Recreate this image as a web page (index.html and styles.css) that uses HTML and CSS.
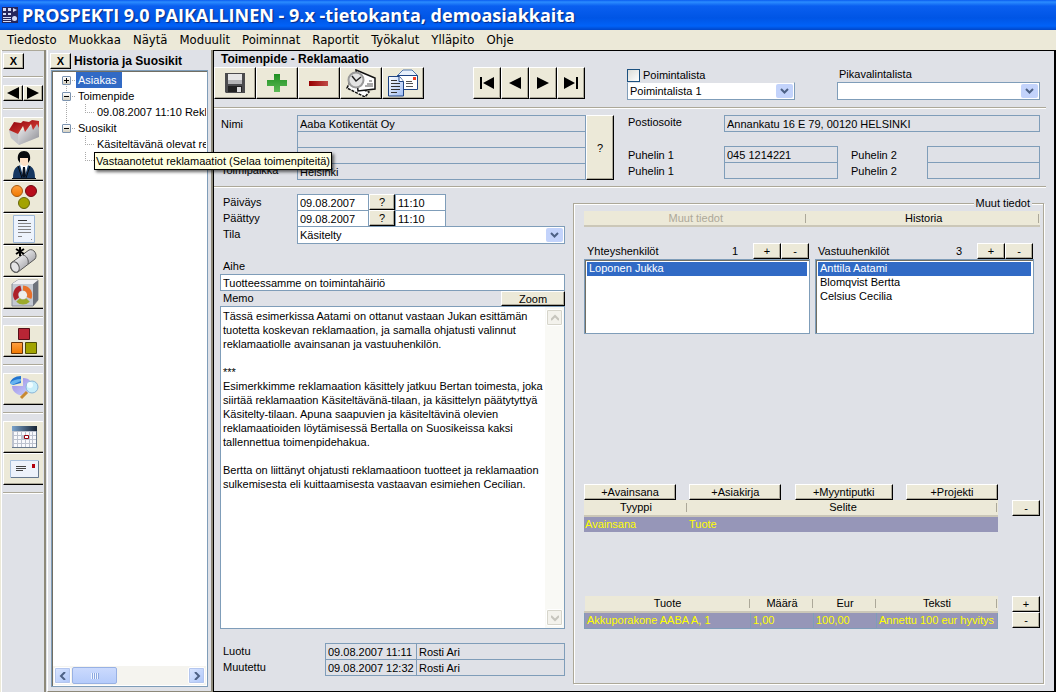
FILE: index.html
```html
<!DOCTYPE html>
<html lang="fi">
<head>
<meta charset="utf-8">
<title>PROSPEKTI 9.0 PAIKALLINEN</title>
<link rel="stylesheet" href="styles.css">
</head>
<body>
<svg class="defs" width="0" height="0" aria-hidden="true">
  <defs>
    <linearGradient id="gBlue" x1="0" y1="0" x2="1" y2="1"><stop offset="0" stop-color="#fff"/><stop offset="1" stop-color="#9dbcf5"/></linearGradient>
    <linearGradient id="gGreen" x1="0" y1="0" x2="0" y2="1"><stop offset="0" stop-color="#1f8f22"/><stop offset="1" stop-color="#5cba55"/></linearGradient>
    <linearGradient id="gRed" x1="0" y1="0" x2="1" y2="0"><stop offset="0" stop-color="#980000"/><stop offset="1" stop-color="#c04a46"/></linearGradient>
    <linearGradient id="gRoof" x1="0" y1="0" x2="1" y2="1"><stop offset="0" stop-color="#8c0009"/><stop offset="1" stop-color="#e2483c"/></linearGradient>
    <linearGradient id="gGrey" x1="0" y1="0" x2="1" y2="1"><stop offset="0" stop-color="#f4f4f6"/><stop offset="1" stop-color="#8a8a90"/></linearGradient>
    <linearGradient id="gPipe" x1="0" y1="0" x2="1" y2="1"><stop offset="0.200" stop-color="#ffffff"/><stop offset="0.800" stop-color="#9c9ca2"/></linearGradient>
    <linearGradient id="gOrange" x1="0" y1="0" x2="0" y2="1"><stop offset="0" stop-color="#ffa040"/><stop offset="1" stop-color="#f07800"/></linearGradient>
    <linearGradient id="gPie" x1="0" y1="0" x2="1" y2="1"><stop offset="0" stop-color="#9a86e0"/><stop offset="1" stop-color="#c9d3ff"/></linearGradient>
    <linearGradient id="gCal" x1="0" y1="0" x2="1" y2="0"><stop offset="0" stop-color="#7aa3cc"/><stop offset="1" stop-color="#162231"/></linearGradient>
  </defs>
</svg>

<header class="titlebar">
  <svg width="16" height="16" viewBox="0 0 16 16" aria-hidden="true"><path fill="#26265c" d="M0 0h16v16H0z"/><path fill="#d5dcf5" d="M1 1h3v3H1zM6 1h3v3H6zM11 1l4 2-4 2zM1 6h3v2H1zM6 6h3v2H6zM1 10h8v1H1zM1 12h8v1H1zM1 14h8v1H1z"/><circle cx="12.500" cy="11.500" r="2.500" fill="#d5dcf5"/></svg>
  <h1>PROSPEKTI 9.0 PAIKALLINEN - 9.x -tietokanta, demoasiakkaita</h1>
</header>

<nav class="menubar">
  <button type="button">Tiedosto</button><button type="button">Muokkaa</button><button type="button">Näytä</button><button type="button">Moduulit</button><button type="button">Poiminnat</button><button type="button">Raportit</button><button type="button">Työkalut</button><button type="button">Ylläpito</button><button type="button">Ohje</button>
</nav>

<div class="workspace">
  <aside class="toolstrip">
    <button type="button" class="btn close">X</button>
    <hr>
    <div class="arrows">
      <button type="button" class="btn" aria-label="Edellinen"><svg width="14" height="12" viewBox="0 0 14 12"><path d="M13 0v12L1 6z"/></svg></button><button type="button" class="btn" aria-label="Seuraava"><svg width="14" height="12" viewBox="0 0 14 12"><path d="M1 0v12l12-6z"/></svg></button>
    </div>
    <hr>
    <button type="button" class="tool" aria-label="Yritykset"><svg width="32" height="28" viewBox="0 0 32 28"><path fill="#d9d9dc" d="M1 11l9 3 21-11v15l-20 8-8-7z"/><path fill="url(#gGrey)" d="M10 13L31 4v14l-20 8z"/><path fill="#c3c3c8" d="M1 11l9 3 1 12-8-7z"/><path fill="url(#gRoof)" d="M1 11L6 3l7 1 2-2 6 1 3-2 7 1v7l-2-4-4 6-2-6-6 8-2-6-5 8z"/></svg></button>
    <button type="button" class="tool" aria-label="Henkilöt"><svg width="32" height="28" viewBox="0 0 32 28"><path fill="#153761" d="M5 27c0-9 3-12 8-13h6c5 1 8 4 8 13z"/><path fill="#fff" d="M12 14h8l-3 11h-2z"/><path fill="#06101f" d="M15 16h2l1 9-2 2-2-2zM4 27h24v1H4z"/><path fill="#ffe0c6" d="M12 6h9v5l-3 4h-3l-3-4z"/><path fill="#07090c" d="M10 9c-1-6 2-9 6-9s7 3 6 9l-2 3V7l-8 0v5z"/><path stroke="#07090c" stroke-width="1" fill="none" d="M10 15l4 12M22 15l-4 12"/></svg></button>
    <button type="button" class="tool" aria-label="Ryhmät"><svg width="32" height="28" viewBox="0 0 32 28"><g stroke-width="1"><circle cx="9" cy="8" r="5.500" fill="url(#gOrange)" stroke="#a65a12"/><circle cx="23" cy="8" r="5.500" fill="#b80d1c" stroke="#6e0a12"/><circle cx="16" cy="20" r="5.500" fill="#a3a300" stroke="#65650a"/></g></svg></button>
    <button type="button" class="tool" aria-label="Asiakirjat"><svg width="32" height="28" viewBox="0 0 32 28"><path fill="#edf3fc" stroke="#9db7d6" d="M5.500.5h21v27h-21z"/><path stroke="#333" d="M10 5.500h9"/><path stroke="#858585" d="M10 8.500h13M10 11.500h13M10 14.500h13M10 17.500h13M10 21.500h4M23 24.500h1"/></svg></button>
    <button type="button" class="tool" aria-label="Myyntiputki"><svg width="32" height="28" viewBox="0 0 32 28"><path fill="url(#gPipe)" stroke="#555" d="M3 16L21 3c5-2 9 5 6 9L10 25c-5 2-9-4-7-9z"/><ellipse cx="7" cy="20" rx="4" ry="5.500" transform="rotate(-25 7 20)" fill="#e4e4e6" stroke="#555"/><path stroke="#555" fill="none" d="M15 8c4 1 6 5 5 9"/><path stroke="#000" stroke-width="2" d="M12 0v9M8 2l8 5M16 2L8 7"/></svg></button>
    <button type="button" class="tool" aria-label="Projektit"><svg width="32" height="28" viewBox="0 0 32 28"><path fill="#c3c8d2" stroke="#8a8d96" d="M4 5l6-4h20v20l-5 6H4z"/><path fill="#6d727c" d="M25 5l5-4v20l-5 6z"/><path fill="#f0f0f3" d="M4 5h21l5-4H10z"/><circle cx="15" cy="16" r="4" fill="#eee"/><g fill="none" stroke-width="5"><path stroke="#ae2028" d="M9 20a7 7 0 0 1 4-11"/><path stroke="#e8702b" d="M15 9a7 7 0 0 1 6 10"/><path stroke="#9caa2b" d="M20 21a7 7 0 0 1-10 0"/></g></svg></button>
    <hr>
    <button type="button" class="tool" aria-label="Tuotteet"><svg width="32" height="28" viewBox="0 0 32 28"><path fill="#b92535" stroke="#551019" d="M10.500 1.500h11v11h-11z"/><path fill="url(#gOrange)" stroke="#693408" d="M3.500 15.500h11v11h-11z"/><path fill="#a2a400" stroke="#4c4c07" d="M17.500 15.500h11v11h-11z"/></svg></button>
    <hr>
    <button type="button" class="tool" aria-label="Raportit"><svg width="32" height="28" viewBox="0 0 32 28"><path fill="url(#gPie)" d="M4 11h11V3c7 0 10 5 8 10-2 6-9 9-14 6-3-2-5-4-5-8z"/><path fill="#2274cf" d="M2 8c1-4 5-7 11-7v7l-8 2z"/><path fill="#67b4f0" d="M2 8c3-3 6-4 11-4v2L4 10z"/><path stroke="#c88a31" stroke-width="3" d="M19 17l-6 6"/><circle cx="24" cy="12" r="6" fill="#c8eefa" stroke="#8ab6d8"/><circle cx="22" cy="10" r="3" fill="#eefcff"/></svg></button>
    <hr>
    <button type="button" class="tool" aria-label="Kalenteri"><svg width="32" height="28" viewBox="0 0 32 28"><path fill="#bcc2ce" d="M4 3h25v22H4z"/><path fill="url(#gCal)" d="M4 3h25v5H4z"/><path fill="#f8f9fc" d="M6 9h3v3H6zM10 9h3v3h-3zM14 9h3v3h-3zM18 9h3v3h-3zM22 9h2v3h-2zM25 9h3v3h-3zM6 13h3v3H6zM10 13h3v3h-3zM22 13h2v3h-2zM25 13h3v3h-3zM6 17h3v3H6zM10 17h3v3h-3zM14 17h3v3h-3zM18 17h3v3h-3zM22 17h2v3h-2zM25 17h3v3h-3zM6 21h3v3H6zM10 21h3v3h-3zM14 21h3v3h-3zM18 21h3v3h-3zM22 21h2v3h-2zM25 21h3v3h-3z"/><path fill="#fff" stroke="#98000c" d="M16.500 12.500h4v3h-4z"/><path fill="none" stroke="#68798d" d="M28.500 8v16.500H4"/></svg></button>
    <button type="button" class="tool" aria-label="Viestit"><svg width="32" height="28" viewBox="0 0 32 28"><path fill="#edf2fb" stroke="#a8c0dc" d="M2.500 5.500h28v17h-28z"/><path fill="none" stroke="#66788e" d="M30.500 6v16.500H3"/><path stroke="#444" d="M8 11.500h10M8 13.500h10M8 15.500h7"/><path fill="#b3000c" d="M24 9h3v4h-3z"/></svg></button>
    <hr>
  </aside>

  <aside class="history">
    <div class="panelhead"><button type="button" class="btn close">X</button><h2>Historia ja Suosikit</h2></div>
    <div class="treebox">
      <ul class="tree">
        <li><span class="node"><i class="box plus"></i><a href="#" class="sel">Asiakas</a></span></li>
        <li><span class="node"><i class="box"></i><a href="#">Toimenpide</a></span>
          <ul><li><a href="#">09.08.2007 11:10 Reklamaatio</a></li></ul></li>
        <li><span class="node"><i class="box"></i><a href="#">Suosikit</a></span>
          <ul><li><a href="#">Käsiteltävänä olevat reklamaatiot</a></li><li class="tipped"><a href="#">&nbsp;</a><span class="tooltip" role="tooltip">Vastaanotetut reklamaatiot (Selaa toimenpiteitä)</span></li></ul></li>
      </ul>
      <div class="hscroll">
        <button type="button" class="xp" aria-label="Vieritä vasemmalle"><svg width="8" height="8" viewBox="0 0 8 8"><path d="M6 0L2 4l4 4"/></svg></button>
        <div class="track"><div class="thumb"></div></div>
        <button type="button" class="xp" aria-label="Vieritä oikealle"><svg width="8" height="8" viewBox="0 0 8 8"><path d="M2 0l4 4-4 4"/></svg></button>
      </div>
    </div>
  </aside>

  <main class="form">
    <h2>Toimenpide - Reklamaatio</h2>
    <div class="toprow">
      <div class="actions">
        <button type="button" class="btn" aria-label="Tallenna"><svg width="32" height="28" viewBox="0 0 32 28"><path fill="#4b4b4d" d="M6 4h20v20H7l-1-1V5z"/><path fill="#e6e6e6" d="M9 5h14v9H9z"/><path fill="#b5b5b7" d="M9 11h14v4H9z"/><path fill="#222" d="M9 17h14v6H9z"/><path fill="#ddd" d="M18 18h4v5h-4z"/></svg></button>
        <button type="button" class="btn" aria-label="Lisää"><svg width="32" height="28" viewBox="0 0 32 28"><path fill="url(#gGreen)" d="M13 5h6v6h7v6h-7v6h-6v-6H6v-6h7z"/></svg></button>
        <button type="button" class="btn" aria-label="Poista"><svg width="32" height="28" viewBox="0 0 32 28"><path fill="url(#gRed)" d="M6 12h19v5H6z"/></svg></button>
        <button type="button" class="btn" aria-label="Muistutus"><svg width="32" height="28" viewBox="0 0 32 28"><path fill="#fff" stroke="#111" stroke-width="1.500" stroke-dasharray="3 1" d="M4 15l20 8-4 5-18-9z"/><path fill="#fff" stroke="#111" stroke-width="1.500" d="M11 1l19 8v11l-17 2z"/><path stroke="#555" d="M24 12h3M22 15h6M20 17h8"/><circle cx="11" cy="11" r="7.500" fill="#e4e4e4" stroke="#9a9a9a" stroke-width="2"/><path fill="none" stroke="#222" stroke-width="1.500" d="M7 7l4 5 5-4"/></svg></button>
        <button type="button" class="btn" aria-label="Viesti"><svg width="32" height="28" viewBox="0 0 32 28"><path fill="#e7f0fc" stroke="#5478ae" d="M10 7l6-6h9l6 6"/><path fill="#fff" stroke="#1d4384" d="M10.500 6.500h20v14h-20z"/><path fill="#f23c21" d="M26 8h3v3h-3z"/><path stroke="#555" d="M19 12.500h6M19 14.500h7M19 17.500h7"/><path fill="url(#gBlue)" stroke="#1d4384" d="M1.500 7.500h11l4 5v14.500h-15z"/><path fill="#fff" stroke="#1d4384" d="M12 7.500v5h4.500"/><path stroke="#333" d="M4 11.500h6M4 14.500h9M4 17.500h9M4 20.500h9M4 23.500h6"/></svg></button>
      </div>
      <div class="recnav">
        <button type="button" class="btn" aria-label="Ensimmäinen"><svg width="16" height="14" viewBox="0 0 16 14"><path d="M1 1h2v12H1zM15 1v12L4 7z"/></svg></button>
        <button type="button" class="btn" aria-label="Edellinen"><svg width="16" height="14" viewBox="0 0 16 14"><path d="M14 1v12L2 7z"/></svg></button>
        <button type="button" class="btn" aria-label="Seuraava"><svg width="16" height="14" viewBox="0 0 16 14"><path d="M2 1v12l12-6z"/></svg></button>
        <button type="button" class="btn" aria-label="Viimeinen"><svg width="16" height="14" viewBox="0 0 16 14"><path d="M13 1h2v12h-2zM1 1v12l11-6z"/></svg></button>
      </div>
      <div class="picklist">
        <span class="checkrow"><input type="checkbox" id="poim"><label for="poim">Poimintalista</label></span>
        <select aria-label="Poimintalista"><option>Poimintalista 1</option></select>
      </div>
      <div class="quick">
        <label for="pika">Pikavalintalista</label>
        <select id="pika"><option></option></select>
      </div>
    </div>
    <hr>
    <section class="customer">
      <div class="labels"><label for="nimi">Nimi</label><label for="toimip">Toimipaikka</label></div>
      <div class="stack"><input id="nimi" value="Aaba Kotikentät Oy" readonly><input aria-label="Nimi 2" readonly><input aria-label="Nimi 3" readonly><input id="toimip" value="Helsinki" readonly></div>
      <button type="button" class="btn">?</button>
      <div class="contact">
        <label for="posti">Postiosoite</label><input id="posti" class="wide" value="Annankatu 16 E 79, 00120 HELSINKI" readonly>
        <div class="labels"><label for="p1">Puhelin 1</label><label for="p3">Puhelin 1</label></div>
        <div class="stack"><input id="p1" value="045 1214221" readonly><input id="p3" readonly></div>
        <div class="labels second"><label for="p2">Puhelin 2</label><label for="p4">Puhelin 2</label></div>
        <div class="stack"><input id="p2" readonly><input id="p4" readonly></div>
      </div>
    </section>
    <hr>
    <div class="details">
      <section class="event">
        <div class="dates">
          <label for="pvm">Päiväys</label><input id="pvm" value="09.08.2007"><button type="button" class="btn">?</button><input aria-label="Alkaa klo" value="11:10">
          <label for="loppu">Päättyy</label><input id="loppu" value="09.08.2007"><button type="button" class="btn">?</button><input aria-label="Päättyy klo" value="11:10">
          <label for="tila">Tila</label><select id="tila"><option>Käsitelty</option></select>
        </div>
        <label class="subject" for="aihe">Aihe</label>
        <input id="aihe" value="Tuotteessamme on toimintahäiriö">
        <div class="memohead"><label for="memo">Memo</label><button type="button" class="btn">Zoom</button></div>
        <div class="memo">
          <textarea id="memo">Tässä esimerkissa Aatami on ottanut vastaan Jukan esittämän
tuotetta koskevan reklamaation, ja samalla ohjatusti valinnut
reklamaatiolle avainsanan ja vastuuhenkilön.

***
Esimerkkimme reklamaation käsittely jatkuu Bertan toimesta, joka
siirtää reklamaation Käsiteltävänä-tilaan, ja käsittelyn päätytyttyä
Käsitelty-tilaan. Apuna saapuvien ja käsiteltävinä olevien
reklamaatioiden löytämisessä Bertalla on Suosikeissa kaksi
tallennettua toimenpidehakua.

Bertta on liittänyt ohjatusti reklamaatioon tuotteet ja reklamaation
sulkemisesta eli kuittaamisesta vastaavan esimiehen Cecilian.</textarea>
          <div class="vscroll">
            <button type="button" class="xp" disabled aria-label="Ylös"><svg width="8" height="8" viewBox="0 0 8 8"><path d="M0 6l4-4 4 4"/></svg></button>
            <button type="button" class="xp" disabled aria-label="Alas"><svg width="8" height="8" viewBox="0 0 8 8"><path d="M0 2l4 4 4-4"/></svg></button>
          </div>
        </div>
        <div class="audit">
          <div class="labels"><label for="luotu">Luotu</label><label for="muut">Muutettu</label></div>
          <div class="stack when"><input id="luotu" value="09.08.2007 11:11" readonly><input id="muut" value="09.08.2007 12:32" readonly></div>
          <div class="stack who"><input aria-label="Luoja" value="Rosti Ari" readonly><input aria-label="Muuttaja" value="Rosti Ari" readonly></div>
        </div>
      </section>

      <fieldset class="other">
        <legend>Muut tiedot</legend>
        <div class="tabs"><button type="button" disabled>Muut tiedot</button><button type="button">Historia</button></div>
        <div class="people">
          <div class="list">
            <div class="listhead"><label for="yht">Yhteyshenkilöt</label><span>1</span><button type="button" class="btn">+</button><button type="button" class="btn">-</button></div>
            <select id="yht" size="5"><option selected>Loponen Jukka</option></select>
          </div>
          <div class="list">
            <div class="listhead"><label for="vas">Vastuuhenkilöt</label><span>3</span><button type="button" class="btn">+</button><button type="button" class="btn">-</button></div>
            <select id="vas" size="5"><option selected>Anttila Aatami</option><option>Blomqvist Bertta</option><option>Celsius Cecilia</option></select>
          </div>
        </div>
        <div class="links">
          <div class="adders"><button type="button" class="btn">+Avainsana</button><button type="button" class="btn">+Asiakirja</button><button type="button" class="btn">+Myyntiputki</button><button type="button" class="btn">+Projekti</button></div>
          <table class="keywords">
            <colgroup><col class="kind"><col></colgroup>
            <thead><tr><th>Tyyppi</th><th>Selite</th></tr></thead>
            <tbody><tr><td>Avainsana</td><td>Tuote</td></tr></tbody>
          </table>
          <div class="side"><button type="button" class="btn">-</button></div>
        </div>
        <div class="links products">
          <table>
            <colgroup><col><col class="num"><col class="num"><col class="note"></colgroup>
            <thead><tr><th>Tuote</th><th>Määrä</th><th>Eur</th><th>Teksti</th></tr></thead>
            <tbody><tr><td>Akkuporakone AABA A, 1</td><td>1,00</td><td>100,00</td><td>Annettu 100 eur hyvitys</td></tr></tbody>
          </table>
          <div class="side"><button type="button" class="btn">+</button><button type="button" class="btn">-</button></div>
        </div>
      </fieldset>
    </div>
  </main>
</div>
</body>
</html>
```

FILE: styles.css
```css
* { box-sizing: border-box; }

html { height: 100%; }

body {
  display: flex;
  flex-direction: column;
  min-height: 100%;
  margin: 0;
  background: #dfe1e7;
  color: #000;
  font: 11px/14px "Liberation Sans", Arial, sans-serif;
}

.defs { position: absolute; }

button, input, select, textarea { margin: 0; font: inherit; color: inherit; border-radius: 0; }
button { display: flex; align-items: center; justify-content: center; padding: 0; border: 0; }
h1, h2 { margin: 0; }
ul { margin: 0; padding: 0; list-style: none; }
a { color: inherit; text-decoration: none; }
svg { display: block; }

hr {
  flex: none;
  height: 2px;
  margin: 0;
  border: 0;
  border-top: 1px solid #aca899;
  background: #fff;
}

.titlebar {
  display: flex;
  align-items: center;
  gap: 4px;
  height: 30px;
  padding: 0 2px;
  background: linear-gradient(#0a5cf0, #2b8cff 2px, #0a5ff0 6px, #0055e5 18px, #0062f8 26px, #0046c8);
}
.titlebar h1 {
  color: #fff;
  font: bold 18px/24px "Open Sans", sans-serif;
  text-shadow: 1px 1px 1px #0a2a80;
  white-space: nowrap;
}

.menubar {
  display: flex;
  gap: 12px;
  height: 20px;
  padding: 0 7px;
  background: #ece9d8;
}
.menubar button { background: none; font: 13px/20px "DejaVu Sans Condensed", sans-serif; }

.workspace { display: flex; flex: 1; }

.btn {
  background: #ece9d8;
  border: solid;
  border-width: 1px;
  border-color: #fff #000 #000 #fff;
  box-shadow: inset -1px -1px #aca899;
}
.close { width: 21px; height: 16px; font-weight: bold; }

/* Left icon strip */
.toolstrip {
  display: flex;
  flex-direction: column;
  gap: 7px;
  width: 46px;
  margin-right: 1px;
  padding: 3px 1px 0 2px;
  border-left: 1px solid #ece9d8;
  border-right: 2px solid #8d897a;
  box-shadow: inset 1px 0 #fff, inset 0 1px #aca899;
}
.toolstrip .tool + .tool { margin-top: -7px; }
.arrows { display: flex; }
.arrows .btn { flex: 1; height: 16px; }
.tool {
  height: 32px;
  background: #ece9d8;
  border-top: 1px solid #fff;
  border-left: 1px solid #fff;
  border-bottom: 1px solid #000;
  box-shadow: inset 0 -1px #aca899;
}

/* History tree */
.history {
  display: flex;
  flex-direction: column;
  width: 166px;
  padding: 3px 3px 4px 2px;
  border-left: 1px solid #fff;
  border-right: 2px solid #8d897a;
  border-bottom: 1px solid #8d897a;
}
.panelhead { display: flex; gap: 3px; }
.panelhead h2, .form h2 { font: bold 12px/17px "Liberation Sans", Arial, sans-serif; white-space: nowrap; }
.treebox {
  display: flex;
  flex: 1;
  flex-direction: column;
  justify-content: space-between;
  margin: 0 0 0 1px;
  padding: 1px;
  background: #fff;
  border: 1px solid #7f9db9;
  box-shadow: inset 1px 1px #716f64;
}
.tree { padding: 0 0 0 9px; line-height: 16px; }
.tree li { white-space: nowrap; }
.node {
  display: flex;
  align-items: center;
  gap: 5px;
  background: repeating-linear-gradient(90deg, #fff 0 1px, #aaa 1px 2px) 9px 8px / 5px 1px no-repeat;
}
.node a { padding: 0 2px; }
.node .sel { padding-right: 5px; background: #316ac5; color: #fff; }
.box {
  width: 9px;
  height: 9px;
  border: 1px solid #7b93b0;
  border-radius: 1px;
  background: linear-gradient(#000, #000) center / 5px 1px no-repeat, linear-gradient(#fff, #d5d0c0);
}
.box.plus {
  background: linear-gradient(#000, #000) center / 5px 1px no-repeat, linear-gradient(#000, #000) center / 1px 5px no-repeat, linear-gradient(#fff, #d5d0c0);
}
.tree > li { background: repeating-linear-gradient(#aaa 0 1px, #fff 1px 2px) 4px 0 / 1px 100% no-repeat; }
.tree > li:last-child { background-size: 1px 8px; }
.tree > li:first-child { background-position: 4px 8px; }
.tree ul { margin-left: 23px; }
.tree ul li {
  padding-left: 12px;
  overflow: hidden;
  background:
    repeating-linear-gradient(#aaa 0 1px, #fff 1px 2px) 0 0 / 1px 8px no-repeat,
    repeating-linear-gradient(90deg, #aaa 0 1px, #fff 1px 2px) 0 8px / 9px 1px no-repeat;
}
.tree ul li.tipped { position: relative; overflow: visible; }
.tooltip {
  position: absolute;
  z-index: 2;
  left: 9px;
  top: 0;
  padding: 0 1px;
  background: #ffffe1;
  border: 1px solid #000;
  box-shadow: 2px 2px 3px #0009;
}
.hscroll { display: flex; gap: 1px; padding: 1px; background: #f5f4ef; }
.xp {
  flex: none;
  width: 17px;
  height: 17px;
  border: 1px solid #fff;
  border-radius: 2px;
  outline: 1px solid #b4c6ee;
  outline-offset: -2px;
  background: linear-gradient(135deg, #dce7ff, #aec6f9);
}
.xp path { fill: none; stroke: #4d6185; stroke-width: 2; }
.xp:disabled { outline-color: #d6d5cb; background: #f3f2ec; }
.xp:disabled path { stroke: #c6c5bd; }
.track { flex: 1; }
.thumb {
  width: 32%;
  min-width: 45px;
  height: 17px;
  border: 1px solid #98b1e4;
  border-radius: 2px;
  background: repeating-linear-gradient(90deg, #eef4ff 0 1px, #8ca8e0 1px 2px) center / 8px 6px no-repeat, linear-gradient(#cbdafd, #b5cbfa);
}

/* Main form */
.form {
  display: flex;
  flex: 1;
  flex-direction: column;
  min-width: 0;
  padding-right: 10px;
  border: solid #000;
  border-width: 1px 2px 1px 1px;
}
.form h2 { padding-left: 7px; line-height: 16px; }
.form > hr { margin-right: -2px; }

input, select, textarea {
  min-width: 0;
  padding: 0 2px;
  background: #fff;
  border: 1px solid #7f9db9;
}
input { width: 100%; height: 17px; }
input:read-only:not([type=checkbox]) { background: transparent; }
select:not([size]) {
  width: 100%;
  height: 18px;
  appearance: none;
  background:
    url("data:image/svg+xml,%3Csvg xmlns='http://www.w3.org/2000/svg' width='17' height='14'%3E%3Crect width='17' height='14' rx='2' fill='%23c3d3fb'/%3E%3Cpath d='M5 5l3.500 3.500L12 5' fill='none' stroke='%234d6185' stroke-width='2'/%3E%3C/svg%3E") right 1px center no-repeat,
    #fff;
}

.toprow { display: flex; align-items: flex-start; }
.actions, .recnav { display: flex; }
.actions { margin-right: 49px; }
.recnav { margin-right: 42px; }
.actions .btn { width: 42px; height: 32px; }
.recnav .btn { width: 28px; height: 32px; }
.picklist { width: 168px; margin-right: 42px; padding-top: 1px; }
.picklist select { border-top-color: #dfe1e7; }
.checkrow { display: flex; align-items: center; gap: 3px; height: 14px; }
.checkrow input {
  width: 13px;
  height: 13px;
  appearance: none;
  background: linear-gradient(135deg, #dcdcd7, #fff);
  border-color: #1c5180;
}
.quick { flex: 1; padding-right: 4px; }
.quick label { display: block; height: 15px; padding-left: 2px; }
.toprow + hr { margin-top: 7px; }

.stack > input { display: block; }
.stack > input + input { margin-top: -1px; }
.labels { display: flex; flex-direction: column; }
.labels label { height: 16px; }

.customer { display: flex; padding: 6px 4px 6px 7px; }
.customer > .labels { width: 76px; padding: 2px 0 1px; justify-content: space-between; }
.customer > .stack { width: 289px; }
.customer > .btn { width: 28px; }
.contact {
  display: grid;
  flex: 1;
  grid-template-columns: 96px 114px 89px 1fr;
  align-content: space-between;
  padding-left: 14px;
}
.contact .wide { grid-column: 2 / 5; }
.contact .labels { padding-top: 2px; }
.contact .second { padding-left: 13px; }

.details { display: flex; flex: 1; gap: 8px; }
.event { display: flex; flex-direction: column; width: 345px; margin-left: 6px; padding: 6px 0 15px; }
.event label { padding-left: 3px; }
.dates { display: grid; grid-template-columns: 77px 72px 26px 51px 1fr; grid-auto-rows: 16px; }
.dates label { grid-column: 1; line-height: 16px; }
.dates select { grid-column: 2 / 6; }
.event .subject { margin-top: 17px; height: 15px; }
.memohead { display: flex; justify-content: space-between; height: 15px; }
.memohead .btn { width: 64px; }
.memo { display: flex; flex: 1; background: #fff; border: 1px solid #7f9db9; }
.memo textarea { flex: 1; padding: 2px; border: 0; resize: none; overflow: hidden; }
.vscroll { display: flex; flex-direction: column; justify-content: space-between; padding: 2px 1px; background: #f9f9f5; }
.audit { display: flex; margin-top: 14px; }
.audit .labels { width: 105px; padding-top: 1px; }
.audit .when { width: 92px; }
.audit .who { flex: 1; margin-left: -1px; }

/* Group box */
.other {
  display: flex;
  flex: 1;
  flex-direction: column;
  min-width: 0;
  margin: 8px 0 7px;
  padding: 1px 3px 54px 10px;
  border: 1px solid #aca899;
  box-shadow: 1px 1px #fff, inset 1px 1px #fff;
}
.other legend { margin-left: auto; margin-right: 8px; padding: 0 2px; background: #dfe1e7; }
.tabs { display: flex; }
.tabs button, th {
  height: 16px;
  background: linear-gradient(#aca899, #aca899) right 1px top 3px / 1px 9px no-repeat, #ece9d8;
  border-bottom: 2px solid #cbc7b8;
}
.tabs button { flex: 223; }
.tabs button + button { flex: 232; }
.tabs button:disabled { color: #aca899; }
.people { display: grid; grid-template-columns: 226fr 219fr; gap: 5px; margin: 16px 6px 0 0; }
.listhead { display: flex; height: 16px; padding: 0 1px 0 3px; }
.listhead label { flex: 1; padding-top: 1px; }
.listhead span { width: 21px; padding-top: 1px; }
.listhead .btn { width: 28px; }
.list select {
  width: 100%;
  height: 75px;
  padding: 2px;
  overflow: hidden;
  border: 1px solid #7f9db9;
  box-shadow: inset 1px 1px #716f64;
}
.list option { min-height: 14px; padding: 0 2px; line-height: 14px; }
.list option:checked { background: linear-gradient(#316ac5, #316ac5); color: #fff; }
.links { display: grid; grid-template-columns: minmax(0, 1fr) 28px; column-gap: 14px; align-items: start; margin-top: auto; }
.products { margin-top: 64px; }
.adders { display: flex; grid-column: 1; justify-content: space-between; }
.adders .btn { width: 92px; height: 16px; }
.adders .btn:nth-child(3) { width: 98px; }
.links table { grid-column: 1; grid-row: 2; }
.links .side { grid-column: 2; grid-row: 2; }
.side .btn { width: 100%; height: 16px; }
table { width: 100%; table-layout: fixed; border-collapse: collapse; }
.kind { width: 104px; }
.num { width: 63px; }
.note { width: 121px; }
th { padding: 0; font-weight: normal; line-height: 14px; }
td { height: 16px; padding: 0 0 0 1px; background: #9696b8; color: #ff0; line-height: 14px; white-space: nowrap; }
.products td { height: 17px; padding-left: 2px; border: 1px solid #7f9db9; }
```
